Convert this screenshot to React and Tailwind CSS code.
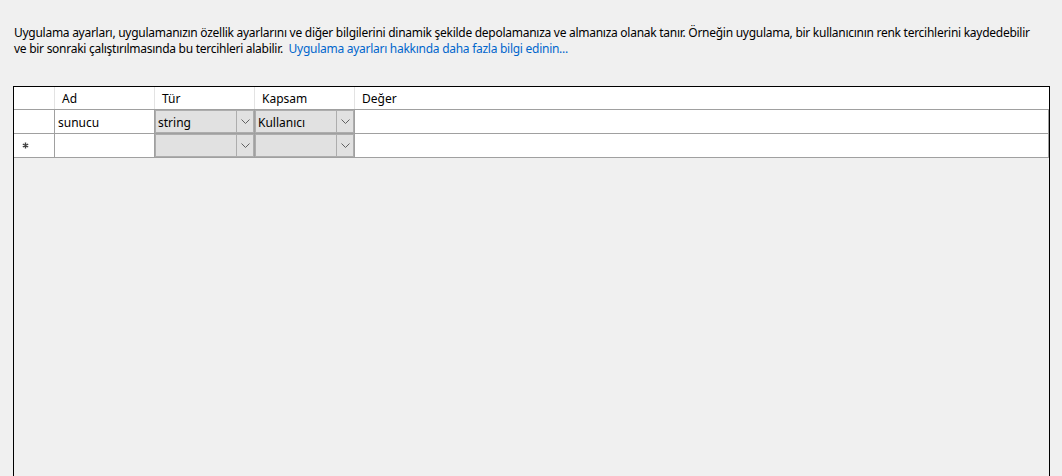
const Chevron = () => (
    <svg width="9" height="5" viewBox="0 0 9 5" className="text-[#606060]">
        <path d="M0.5 0.5 L4.5 4.5 L8.5 0.5" fill="none" stroke="currentColor" strokeWidth="1" />
    </svg>
);

const Star = () => (
    <svg width="7" height="7" viewBox="0 0 7 7" className="text-[#404040]">
        <path d="M3.5 0.5 V6.5 M0.8 2 L6.2 5 M0.8 5 L6.2 2" stroke="currentColor" strokeWidth="1.4" />
    </svg>
);

const Combo = ({ value }) => (
    <div className="w-[100px] h-full border-r border-[#a0a0a0] flex">
        <div className="flex-1 flex bg-[#e1e1e1] border border-[#adadad]">
            <div className="flex-1 flex items-center pl-[2px] pt-[2px] truncate">{value}</div>
            <div className="w-[17px] border-l border-[#adadad] flex items-center justify-center">
                <Chevron />
            </div>
        </div>
    </div>
);

const App = () => {
    return (
        <div
            className="w-[1062px] h-[476px] bg-[#f0f0f0] overflow-hidden text-[12px] text-black"
            style={{ fontFamily: '"Noto Sans", "Open Sans", sans-serif' }}
        >
            {/* Description */}
            <p className="pl-[14px] pt-[25px] leading-[16px] whitespace-nowrap tracking-[-0.27px]">
                Uygulama ayarları, uygulamanızın özellik ayarlarını ve diğer bilgilerini dinamik şekilde depolamanıza ve almanıza olanak tanır. Örneğin uygulama, bir kullanıcının renk tercihlerini kaydedebilir
                <br />
                ve bir sonraki çalıştırılmasında bu tercihleri alabilir.{'\u00a0\u00a0'}
                <span className="text-[#0066cc]">Uygulama ayarları hakkında daha fazla bilgi edinin...</span>
            </p>

            {/* Settings grid */}
            <div className="ml-[13px] mt-[29px] w-[1037px] h-[400px] border border-black bg-[#f0f0f0]">
                {/* Header */}
                <div className="flex h-[23px] bg-white border-b border-[#a0a0a0]">
                    <div className="w-[41px] border-r border-[#e3e3e3]" />
                    <div className="w-[100px] border-r border-[#e3e3e3] flex items-center pl-[7px] pt-[2px]">Ad</div>
                    <div className="w-[100px] border-r border-[#e3e3e3] flex items-center pl-[7px] pt-[2px]">Tür</div>
                    <div className="w-[100px] border-r border-[#e3e3e3] flex items-center pl-[7px] pt-[2px]">Kapsam</div>
                    <div className="flex-1 flex items-center pl-[7px] pt-[2px]">Değer</div>
                </div>

                {/* Row 1 */}
                <div className="flex h-[24px] bg-white border-b border-[#a0a0a0]">
                    <div className="w-[41px] border-r border-[#a0a0a0]" />
                    <div className="w-[100px] border-r border-[#a0a0a0] flex items-center pl-[3px] pt-[2px]">sunucu</div>
                    <Combo value="string" />
                    <Combo value="Kullanıcı" />
                    <div className="flex-1 border-r border-[#a0a0a0]" />
                </div>

                {/* New row */}
                <div className="flex h-[24px] bg-white border-b border-[#a0a0a0]">
                    <div className="w-[41px] border-r border-[#a0a0a0] flex items-center pl-[8px]">
                        <Star />
                    </div>
                    <div className="w-[100px] border-r border-[#a0a0a0]" />
                    <Combo value="" />
                    <Combo value="" />
                    <div className="flex-1 border-r border-[#a0a0a0]" />
                </div>
            </div>
        </div>
    );
};

export default App;
